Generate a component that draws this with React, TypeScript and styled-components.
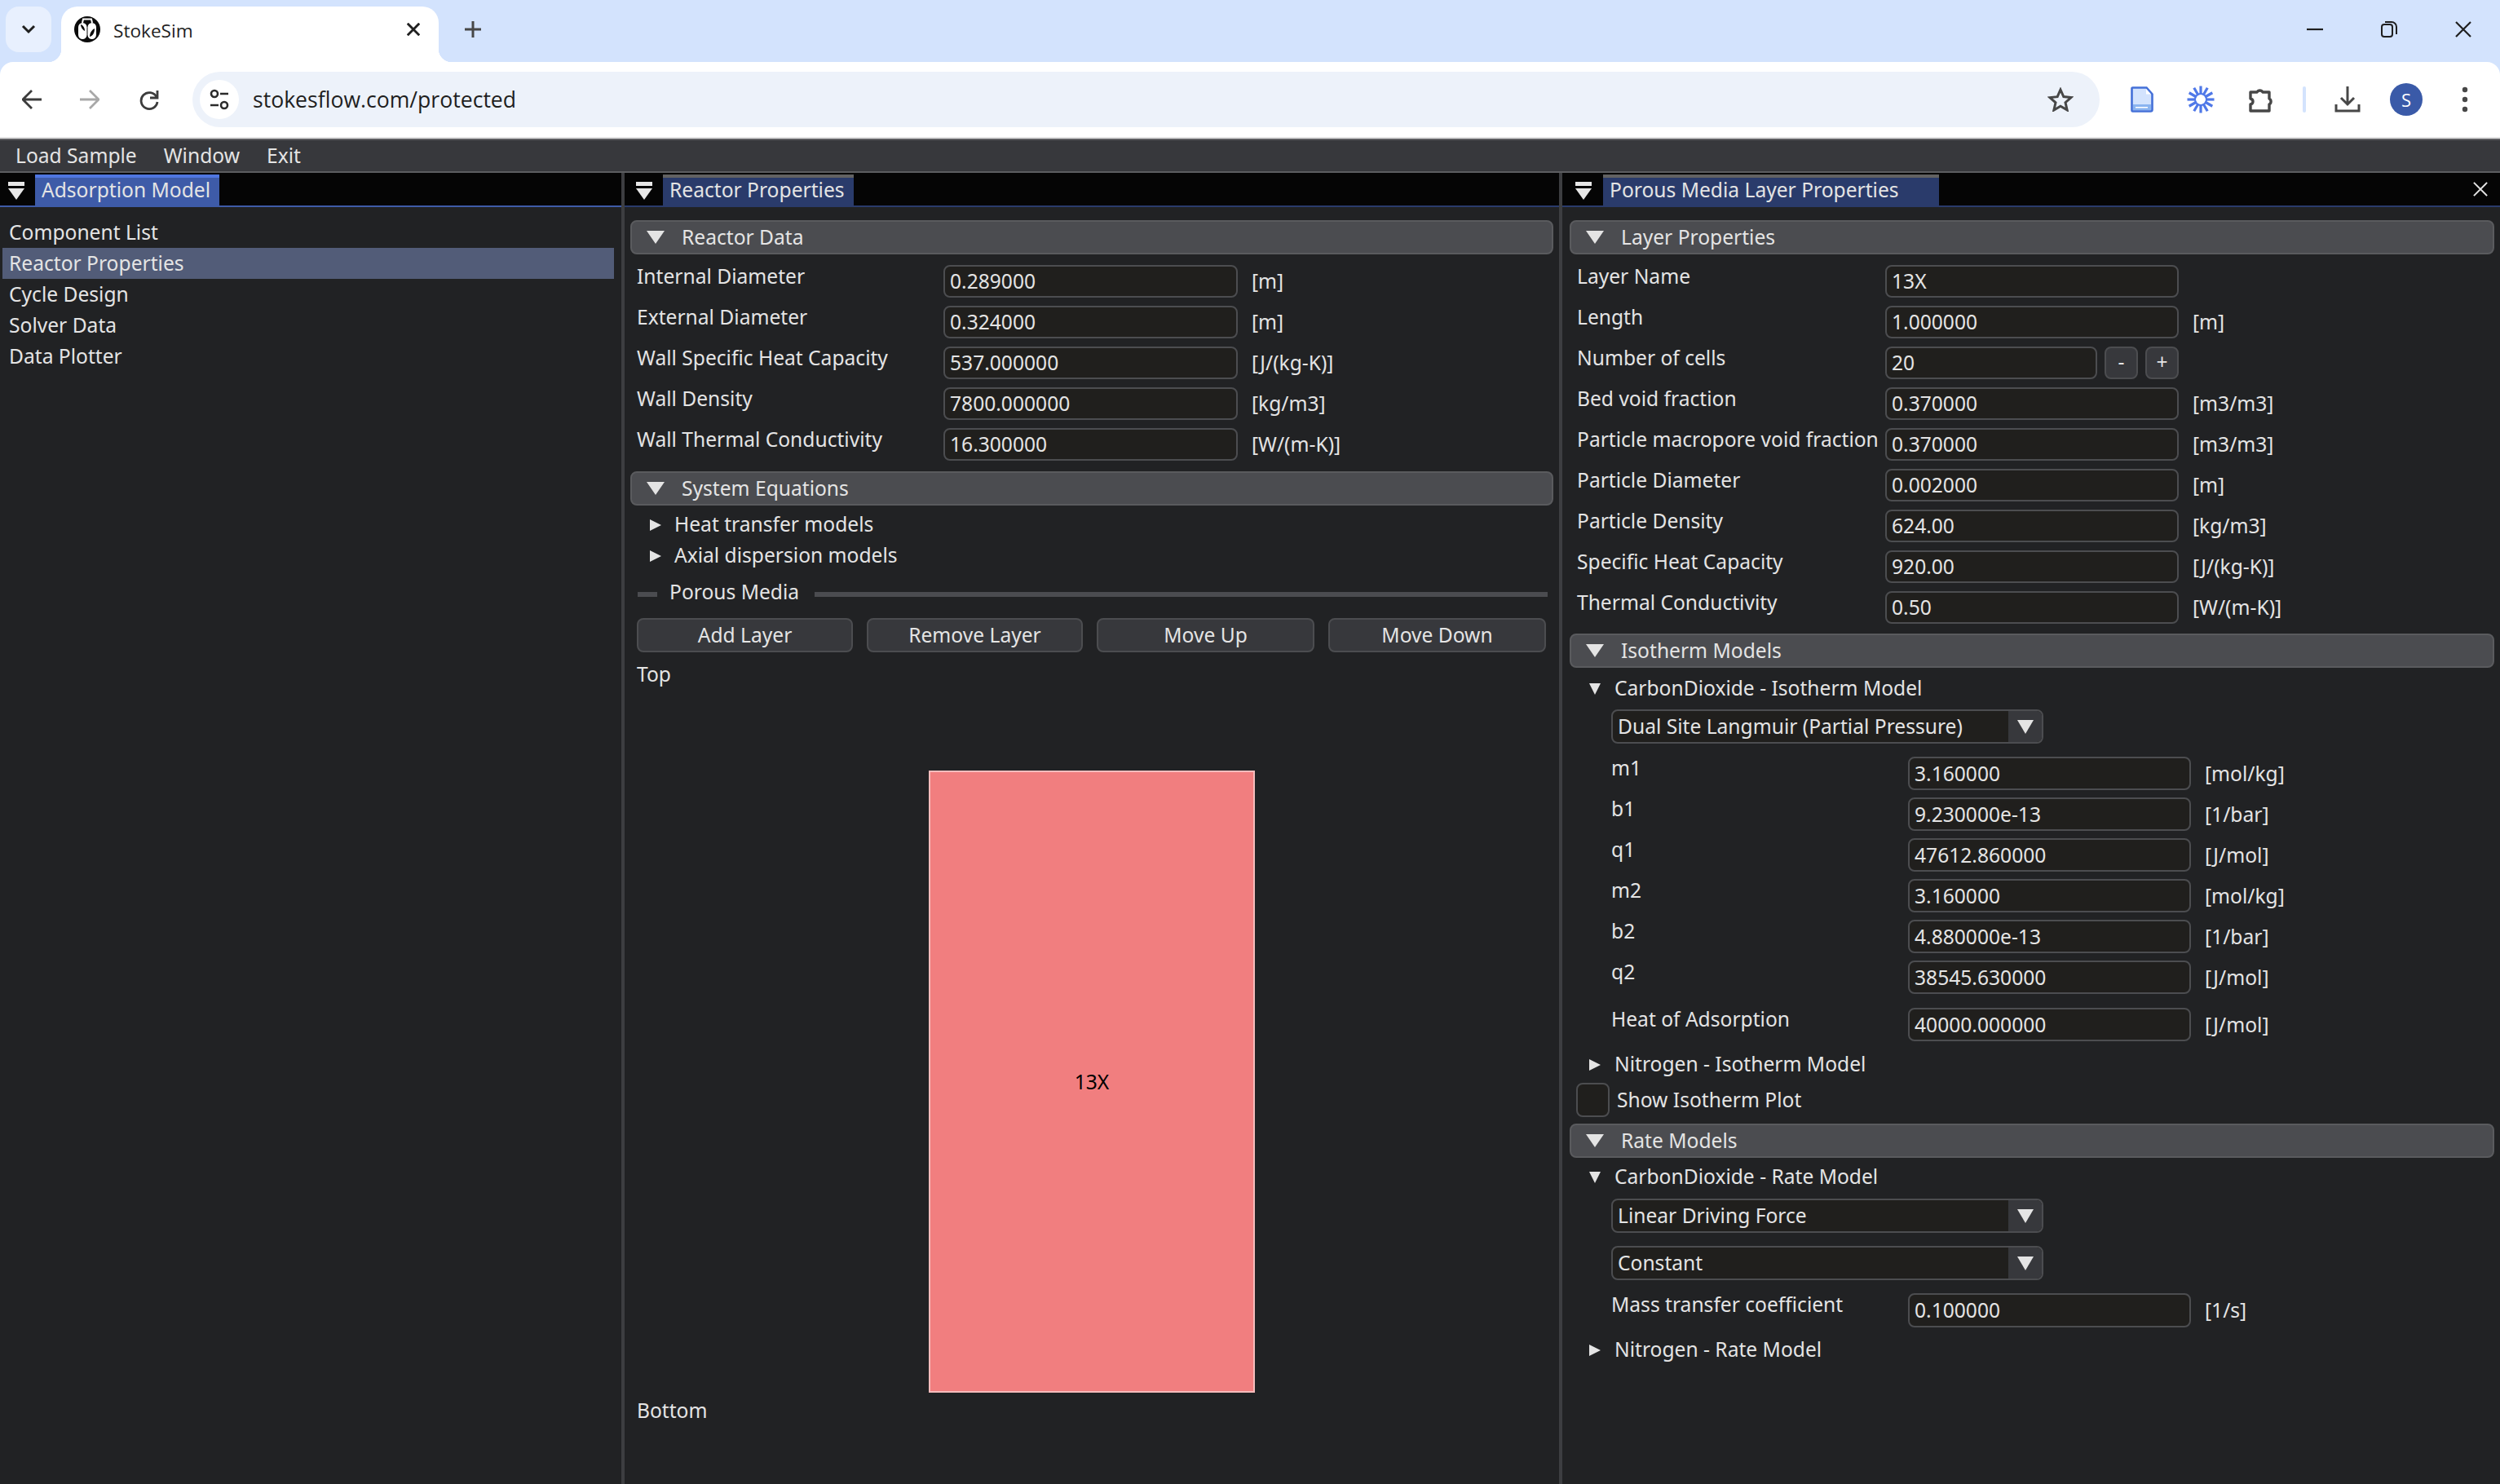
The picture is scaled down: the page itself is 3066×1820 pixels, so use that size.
import React from 'react';
import styled, { createGlobalStyle } from 'styled-components';

const GlobalStyle = createGlobalStyle`
  html, body {
    margin: 0;
    padding: 0;
    background: #212224;
  }
`;

const Page = styled.div`
  width: 3066px;
  height: 1820px;
  overflow: hidden;
  display: flex;
  flex-direction: column;
  font-family: 'Noto Sans', sans-serif;
`;

/* browser chrome */
const ChromeFrame = styled.div`
  flex: none;
  background: #d3e3fd;
`;

const TabStrip = styled.div`
  height: 76px;
  display: flex;
  padding-left: 7px;
  box-sizing: border-box;
  align-items: flex-start;
`;

const TabSearch = styled.div`
  width: 56px;
  height: 56px;
  margin-top: 8px;
  border-radius: 16px;
  background: #e8f0fe;
  display: flex;
  align-items: center;
  justify-content: center;
`;

const ActiveTab = styled.div`
  width: 463px;
  height: 68px;
  margin: 8px 0 0 12px;
  background: #fff;
  border-radius: 20px 20px 0 0;
  display: flex;
  align-items: flex-start;
  padding: 12px 23px 0 16px;
  box-sizing: border-box;
  position: relative;
  z-index: 1;

  &:before,
  &:after {
    content: '';
    position: absolute;
    bottom: 0;
    width: 16px;
    height: 16px;
  }
  &:before {
    left: -16px;
    background: radial-gradient(circle at 0 0, transparent 16px, #fff 16.5px);
  }
  &:after {
    right: -16px;
    background: radial-gradient(circle at 100% 0, transparent 16px, #fff 16.5px);
  }
`;

const TabTitle = styled.span`
  flex: 1;
  margin-left: 16px;
  font-family: 'Open Sans', sans-serif;
  font-size: 22.6px;
  line-height: 36px;
  color: #1f1f1f;
`;

const TabClose = styled.div`
  margin-top: 8px;
  display: flex;
`;

const NewTab = styled.div`
  width: 40px;
  height: 40px;
  margin: 16px 0 0 22px;
  display: flex;
`;

const WindowControls = styled.div`
  margin-left: auto;
  height: 72px;
  display: flex;
  align-items: center;
  padding-right: 35px;
  gap: 71px;
`;

const Toolbar = styled.div`
  height: 94px;
  box-sizing: border-box;
  background: #fff;
  border-bottom: 2px solid #e3e3e3;
  border-radius: 16px 16px 0 0;
  display: flex;
  align-items: center;
  padding: 0 0 0 27px;
`;

const NavButton = styled.div<{ $gap?: number }>`
  width: 24px;
  height: 24px;
  flex: none;
  display: flex;
  margin-right: ${(p) => p.$gap ?? 0}px;
`;

const Omnibox = styled.div`
  width: 2339px;
  height: 68px;
  flex: none;
  box-sizing: border-box;
  background: #edf2fa;
  border-radius: 34px;
  display: flex;
  align-items: center;
  padding: 0 32px 0 9px;
`;

const SiteInfo = styled.div`
  width: 48px;
  height: 48px;
  border-radius: 50%;
  background: #fff;
  display: flex;
  align-items: center;
  justify-content: center;
  flex: none;
`;

const Url = styled.span`
  flex: 1;
  margin-left: 17px;
  font-family: 'Open Sans', sans-serif;
  font-size: 26.6px;
  color: #1f1f1f;
`;

const ToolbarIcons = styled.div`
  display: flex;
  align-items: center;
  margin-left: 38px;
`;

const IconSlot = styled.div<{ $width: number; $gap: number }>`
  width: ${(p) => p.$width}px;
  height: 40px;
  margin-right: ${(p) => p.$gap}px;
  display: flex;
  align-items: center;
  justify-content: center;
  flex: none;
`;

const Divider = styled.div`
  width: 4px;
  height: 32px;
  margin-right: 35px;
  background: #d3e3fd;
  border-radius: 2px;
`;

const Avatar = styled.div`
  width: 40px;
  height: 40px;
  border-radius: 50%;
  background: #3a5aa8;
  color: #fff;
  font-family: 'Open Sans', sans-serif;
  font-size: 22px;
  display: flex;
  align-items: center;
  justify-content: center;
  margin-right: 48px;
  flex: none;
`;

/* imgui app */
const MenuBar = styled.div`
  height: 42px;
  flex: none;
  box-sizing: border-box;
  background: #37383c;
  border-top: 2px solid #5c5d60;
  border-bottom: 2px solid #5c5d60;
  display: flex;
  align-items: center;
  padding: 0 0 2px 19px;
  gap: 33px;
  color: #e4e4e4;
  font-size: 24.6px;
`;

const Dock = styled.div`
  flex: 1;
  display: flex;
  min-height: 0;
  color: #e4e4e4;
  font-size: 24.6px;
`;

const Panel = styled.div<{ $width: number }>`
  width: ${(p) => p.$width}px;
  flex: none;
  display: flex;
  flex-direction: column;
  background: #212224;
`;

const Splitter = styled.div`
  width: 4px;
  flex: none;
  background: #3d3e41;
`;

const PanelTabs = styled.div<{ $active?: boolean }>`
  height: 42px;
  flex: none;
  box-sizing: border-box;
  background: #050505;
  border-bottom: 2px solid ${(p) => (p.$active ? '#3e5ba8' : '#2a3b6b')};
  display: flex;
  align-items: flex-end;
  padding-top: 2px;
`;

const MenuGlyph = styled.div<{ $pad: number; $gap: number }>`
  flex: none;
  margin: 0 ${(p) => p.$gap}px 7px ${(p) => p.$pad}px;
  width: 20px;
  height: 22px;
  display: flex;
  flex-direction: column;
  align-items: center;

  &:before {
    content: '';
    width: 20px;
    height: 5px;
    background: #e8e8e8;
    margin-bottom: 3px;
  }
  &:after {
    content: '';
    width: 0;
    height: 0;
    border-left: 10px solid transparent;
    border-right: 10px solid transparent;
    border-top: 14px solid #e8e8e8;
  }
`;

const PanelTab = styled.div<{ $active?: boolean; $width: number }>`
  width: ${(p) => p.$width}px;
  height: 38px;
  box-sizing: border-box;
  padding-left: 8px;
  white-space: nowrap;
  background: ${(p) => (p.$active ? '#3e5ba8' : '#2a3b6b')};
  border-top: 4px solid ${(p) => (p.$active ? '#4f76e0' : '#626262')};
  line-height: 30px;
`;

const CloseGlyph = styled.div`
  margin: 0 15px 11px auto;
  width: 18px;
  height: 18px;
  display: flex;
`;

const PanelBody = styled.div<{ $left: number; $right: number }>`
  flex: 1;
  display: flex;
  flex-direction: column;
  padding: 16px ${(p) => p.$right}px 0 ${(p) => p.$left}px;
  min-height: 0;
`;

const ListBody = styled.div`
  padding: 12px 9px 0 3px;
`;

const ListItem = styled.div<{ $selected?: boolean }>`
  height: 38px;
  line-height: 37px;
  padding-left: 8px;
  background: ${(p) => (p.$selected ? '#525c78' : 'transparent')};
`;

const Triangle = styled.span<{ $w: number; $h: number; $dir?: 'down' | 'right' }>`
  display: block;
  flex: none;
  width: 0;
  height: 0;
  ${(p) =>
    p.$dir === 'right'
      ? `border-top: ${p.$h / 2}px solid transparent;
         border-bottom: ${p.$h / 2}px solid transparent;
         border-left: ${p.$w}px solid #e4e4e4;`
      : `border-left: ${p.$w / 2}px solid transparent;
         border-right: ${p.$w / 2}px solid transparent;
         border-top: ${p.$h}px solid #e4e4e4;`}
`;

const SectionHeader = styled.div<{ $mt?: number }>`
  height: 42px;
  flex: none;
  box-sizing: border-box;
  margin-top: ${(p) => p.$mt ?? 0}px;
  background: #4b4c50;
  border: 2px solid #5a5b5e;
  border-radius: 8px;
  display: flex;
  align-items: center;
  padding-left: 18px;
`;

const SectionTitle = styled.span`
  margin: 0 0 2px 21px;
`;

const TreeNode = styled.div<{ $mt: number; $indent: number }>`
  height: 38px;
  flex: none;
  margin-top: ${(p) => p.$mt}px;
  padding: 0 0 0 ${(p) => p.$indent}px;
  display: flex;
  align-items: center;
`;

const TreeTriangleBox = styled.div<{ $width: number }>`
  width: ${(p) => p.$width}px;
  flex: none;
  padding-top: 2px;
`;

const TreeTitle = styled.span`
  margin-bottom: 2px;
`;

const Fields = styled.div<{ $mt: number; $gap: number; $left: number }>`
  display: flex;
  flex-direction: column;
  margin-top: ${(p) => p.$mt}px;
  gap: ${(p) => p.$gap}px;
  padding-left: ${(p) => p.$left}px;
  flex: none;
`;

const FieldRow = styled.div`
  display: flex;
  align-items: center;
`;

const FieldLabel = styled.span<{ $width: number }>`
  width: ${(p) => p.$width}px;
  flex: none;
  align-self: flex-start;
  line-height: 27px;
  white-space: nowrap;
`;

const Frame = styled.div<{ $width: number; $height?: number }>`
  width: ${(p) => p.$width}px;
  height: ${(p) => p.$height ?? 40}px;
  flex: none;
  box-sizing: border-box;
  background: #201f1d;
  border: 2px solid #4c4d50;
  border-radius: 8px;
  padding: 0 0 ${(p) => (p.$height === 41 ? 1 : 2)}px 6px;
  display: flex;
  align-items: center;
  position: relative;
  overflow: hidden;
`;

const Unit = styled.span`
  margin: 0 0 1px 17px;
  white-space: nowrap;
`;

const StepButton = styled.div`
  width: 41px;
  height: 40px;
  flex: none;
  box-sizing: border-box;
  margin-left: 9px;
  background: #37383c;
  border: 2px solid #4c4d50;
  border-radius: 8px;
  text-align: center;
  line-height: 34px;
`;

const ComboArrow = styled.div`
  position: absolute;
  right: 0;
  top: 0;
  bottom: 0;
  width: 41px;
  background: #37383c;
  display: flex;
  align-items: center;
  justify-content: center;
`;

const Combo = styled(Frame)<{ $mt: number }>`
  margin-top: ${(p) => p.$mt}px;
  margin-left: 51px;
`;

const SeparatorRow = styled.div`
  height: 38px;
  margin-top: 7px;
  flex: none;
  display: flex;
  align-items: center;
  padding: 0 7px 0 9px;
`;

const SeparatorLine = styled.div<{ $width?: number }>`
  height: 6px;
  margin-top: 6px;
  background: #4b4c50;
  ${(p) => (p.$width ? `width: ${p.$width}px; flex: none;` : 'flex: 1;')}
`;

const SeparatorText = styled.span`
  margin: 0 19px 2px 15px;
`;

const ButtonRow = styled.div`
  margin-top: 13px;
  padding: 0 9px 0 8px;
  display: grid;
  grid-template-columns: 265px 265px 267px 267px;
  column-gap: 17px;
  flex: none;
`;

const ActionButton = styled.div`
  height: 42px;
  box-sizing: border-box;
  background: #37383c;
  border: 2px solid #4c4d50;
  border-radius: 8px;
  text-align: center;
  line-height: 37px;
`;

const PlainText = styled.div<{ $mt: number; $lh: number }>`
  height: 38px;
  flex: none;
  line-height: ${(p) => p.$lh}px;
  margin-top: ${(p) => p.$mt}px;
  padding-left: 8px;
`;

const LayerBlock = styled.div`
  width: 400px;
  height: 763px;
  flex: none;
  align-self: center;
  box-sizing: border-box;
  margin-top: 98px;
  padding-bottom: 1px;
  background: #f17e7f;
  border: 2px solid #f5bcbc;
  color: #000;
  display: flex;
  align-items: center;
  justify-content: center;
`;

const CheckRow = styled.div`
  margin-top: 4px;
  padding-left: 8px;
  display: flex;
  align-items: center;
  flex: none;
`;

const CheckLabel = styled.span`
  margin: 0 0 2px 9px;
`;

const Chevron = () => (
  <svg width="20" height="20" viewBox="0 0 20 20" fill="none" stroke="#1f1f1f" strokeWidth="3">
    <path d="M3 6l7 7 7-7" />
  </svg>
);

const Favicon = () => (
  <svg width="32" height="32" viewBox="0 0 32 32">
    <circle cx="16" cy="16" r="16" fill="#0b0b0b" />
    <path d="M10 8l1-4.500h10l1 4.500" fill="none" stroke="#fff" strokeWidth="2" />
    <rect x="5" y="8" width="10.500" height="20" rx="5.250" fill="#fff" />
    <rect x="16.500" y="8" width="10.500" height="20" rx="5.250" fill="#fff" />
    <path d="M8 10c3 1 5 4 5 8-2-1-5-4-5-8z" fill="#0b0b0b" />
    <path d="M25 15c0 5-2 9-6 10 0-4 2-8 6-10z" fill="#0b0b0b" />
  </svg>
);

const Tune = () => (
  <svg width="24" height="28" viewBox="0 0 24 28" fill="none" stroke="#2b2b2b" strokeWidth="2.600">
    <circle cx="6" cy="7" r="4" />
    <path d="M13 7h10M1 21h10" />
    <circle cx="18" cy="21" r="4" />
  </svg>
);

const Arrow = ({ color, flip }: { color: string; flip?: boolean }) => (
  <svg width="24" height="24" viewBox="0 0 24 24" fill="none" stroke={color} strokeWidth="2.800">
    <path d={flip ? 'M0 12h22M12 1l11 11-11 11' : 'M24 12H2M12 1L1 12l11 11'} />
  </svg>
);

const Reload = () => (
  <svg width="24" height="26" viewBox="0 0 24 26" fill="none" stroke="#3c3c3c" strokeWidth="2.800">
    <path d="M21 9a10 10 0 1 0 1 6" />
    <path d="M22 1v9h-9" />
  </svg>
);

const Star = () => (
  <svg width="32" height="30" viewBox="0 0 32 30" fill="none" stroke="#474747" strokeWidth="3">
    <path d="M16 3l3.800 8.600 9.200.9-7 6.200 2.100 9.200L16 23.200 7.900 28l2.100-9.200-7-6.200 9.200-.9z" />
  </svg>
);

const DocIcon = () => (
  <svg width="28" height="32" viewBox="0 0 28 32">
    <path d="M2.500 1.500h17l7 8v19a2 2 0 0 1-2 2h-22a1 1 0 0 1-1-1v-27a1 1 0 0 1 1-1z" fill="#d3e3fd" stroke="#4470d8" strokeWidth="2.600" />
    <path d="M19 3v6.500h6z" fill="#fff" />
    <rect x="3" y="22" width="22" height="7" fill="#8ab4f0" />
    <rect x="6" y="25" width="15" height="1.500" fill="#fff" />
  </svg>
);

const sparkleAngles = Array.from({ length: 12 }, (_, i) => (i * Math.PI) / 6);

const Sparkle = () => (
  <svg width="34" height="34" viewBox="0 0 34 34" stroke="#4f78e8" strokeWidth="3.200" fill="none">
    {sparkleAngles.map((a) => (
      <line
        key={a}
        x1={17 + 6 * Math.cos(a)}
        y1={17 + 6 * Math.sin(a)}
        x2={17 + 16.500 * Math.cos(a)}
        y2={17 + 16.500 * Math.sin(a)}
      />
    ))}
    <circle cx="17" cy="17" r="7" strokeWidth="2" />
  </svg>
);

const Puzzle = () => (
  <svg width="34" height="34" viewBox="0 0 34 34" fill="none" stroke="#474747" strokeWidth="3.400" strokeLinejoin="round">
    <path d="M4 8h8a4 4 0 0 1 7 0h8v8a4 4 0 0 1 0 7v8H4v-8c4-1 4-6 0-7z" />
  </svg>
);

const Download = () => (
  <svg width="32" height="32" viewBox="0 0 32 32" fill="none" stroke="#474747" strokeWidth="3">
    <path d="M16 0v21M8 14l8 8 8-8" />
    <path d="M2 22v8h28v-8" />
  </svg>
);

const Dots = () => (
  <svg width="8" height="32" viewBox="0 0 8 32" fill="#474747">
    <circle cx="4" cy="4" r="3.200" />
    <circle cx="4" cy="16" r="3.200" />
    <circle cx="4" cy="28" r="3.200" />
  </svg>
);

const Minimize = () => (
  <svg width="20" height="20" viewBox="0 0 20 20" stroke="#1f1f1f" strokeWidth="2.200">
    <path d="M0 10h20" />
  </svg>
);

const Restore = () => (
  <svg width="20" height="20" viewBox="0 0 20 20" fill="none" stroke="#1f1f1f" strokeWidth="2">
    <rect x="1" y="4" width="13" height="15" rx="3" />
    <path d="M5 1h8a6 6 0 0 1 6 6v9" />
  </svg>
);

const CloseIcon = ({ color, width = 2.200, size = 20 }: { color: string; width?: number; size?: number }) => (
  <svg width={size} height={size} viewBox="0 0 20 20" stroke={color} strokeWidth={width}>
    <path d="M1 1l18 18M19 1L1 19" />
  </svg>
);

const Plus = () => (
  <svg width="40" height="40" viewBox="0 0 40 40" stroke="#474747" strokeWidth="3">
    <path d="M20 10v20M10 20h20" />
  </svg>
);

const reactorFields = [
  ['Internal Diameter', '0.289000', '[m]'],
  ['External Diameter', '0.324000', '[m]'],
  ['Wall Specific Heat Capacity', '537.000000', '[J/(kg-K)]'],
  ['Wall Density', '7800.000000', '[kg/m3]'],
  ['Wall Thermal Conductivity', '16.300000', '[W/(m-K)]'],
];

const layerTail = [
  ['Bed void fraction', '0.370000', '[m3/m3]'],
  ['Particle macropore void fraction', '0.370000', '[m3/m3]'],
  ['Particle Diameter', '0.002000', '[m]'],
  ['Particle Density', '624.00', '[kg/m3]'],
  ['Specific Heat Capacity', '920.00', '[J/(kg-K)]'],
  ['Thermal Conductivity', '0.50', '[W/(m-K)]'],
];

const isothermFields = [
  ['m1', '3.160000', '[mol/kg]'],
  ['b1', '9.230000e-13', '[1/bar]'],
  ['q1', '47612.860000', '[J/mol]'],
  ['m2', '3.160000', '[mol/kg]'],
  ['b2', '4.880000e-13', '[1/bar]'],
  ['q2', '38545.630000', '[J/mol]'],
];

const Field: React.FC<{ label: string; value: string; unit?: string; labelWidth: number; inputWidth: number; height?: number }> = ({
  label,
  value,
  unit,
  labelWidth,
  inputWidth,
  height,
}) => (
  <FieldRow>
    <FieldLabel $width={labelWidth}>{label}</FieldLabel>
    <Frame $width={inputWidth} $height={height}>{value}</Frame>
    {unit && <Unit>{unit}</Unit>}
  </FieldRow>
);

const Header: React.FC<{ title: string; mt?: number }> = ({ title, mt }) => (
  <SectionHeader $mt={mt}>
    <Triangle $w={22} $h={16} />
    <SectionTitle>{title}</SectionTitle>
  </SectionHeader>
);

const Tree: React.FC<{ title: string; mt: number; indent: number; box: number; open?: boolean }> = ({ title, mt, indent, box, open }) => (
  <TreeNode $mt={mt} $indent={indent}>
    <TreeTriangleBox $width={box}>{open ? <Triangle $w={14} $h={14} /> : <Triangle $w={14} $h={15} $dir="right" />}</TreeTriangleBox>
    <TreeTitle>{title}</TreeTitle>
  </TreeNode>
);

const Select: React.FC<{ value: string; mt: number }> = ({ value, mt }) => (
  <Combo $width={530} $height={42} $mt={mt}>
    {value}
    <ComboArrow>
      <Triangle $w={21} $h={17} />
    </ComboArrow>
  </Combo>
);

const App: React.FC = () => {
  return (
    <Page>
      <GlobalStyle />
      <ChromeFrame>
        <TabStrip>
          <TabSearch>
            <Chevron />
          </TabSearch>
          <ActiveTab>
            <Favicon />
            <TabTitle>StokeSim</TabTitle>
            <TabClose>
              <CloseIcon color="#1f1f1f" width={3.600} size={16} />
            </TabClose>
          </ActiveTab>
          <NewTab>
            <Plus />
          </NewTab>
          <WindowControls>
            <Minimize />
            <Restore />
            <CloseIcon color="#1f1f1f" />
          </WindowControls>
        </TabStrip>
        <Toolbar>
          <NavButton $gap={47}>
            <Arrow color="#3c3c3c" />
          </NavButton>
          <NavButton $gap={49}>
            <Arrow color="#a8a8a8" flip />
          </NavButton>
          <NavButton $gap={41}>
            <Reload />
          </NavButton>
          <Omnibox>
            <SiteInfo>
              <Tune />
            </SiteInfo>
            <Url>stokesflow.com/protected</Url>
            <Star />
          </Omnibox>
          <ToolbarIcons>
            <IconSlot $width={28} $gap={41}>
              <DocIcon />
            </IconSlot>
            <IconSlot $width={34} $gap={40}>
              <Sparkle />
            </IconSlot>
            <IconSlot $width={34} $gap={34}>
              <Puzzle />
            </IconSlot>
            <Divider />
            <IconSlot $width={32} $gap={36}>
              <Download />
            </IconSlot>
            <Avatar>S</Avatar>
            <Dots />
          </ToolbarIcons>
        </Toolbar>
      </ChromeFrame>

      <MenuBar>
        <span>Load Sample</span>
        <span>Window</span>
        <span>Exit</span>
      </MenuBar>

      <Dock>
        <Panel $width={762}>
          <PanelTabs $active>
            <MenuGlyph $pad={10} $gap={13} />
            <PanelTab $active $width={226}>Adsorption Model</PanelTab>
          </PanelTabs>
          <ListBody>
            <ListItem>Component List</ListItem>
            <ListItem $selected>Reactor Properties</ListItem>
            <ListItem>Cycle Design</ListItem>
            <ListItem>Solver Data</ListItem>
            <ListItem>Data Plotter</ListItem>
          </ListBody>
        </Panel>
        <Splitter />

        <Panel $width={1146}>
          <PanelTabs>
            <MenuGlyph $pad={14} $gap={13} />
            <PanelTab $width={234}>Reactor Properties</PanelTab>
          </PanelTabs>
          <PanelBody $left={7} $right={7}>
            <Header title="Reactor Data" />
            <Fields $mt={13} $gap={10} $left={8}>
              {reactorFields.map(([label, value, unit]) => (
                <Field key={label} label={label} value={value} unit={unit} labelWidth={376} inputWidth={361} />
              ))}
            </Fields>
            <Header title="System Equations" mt={13} />
            <Tree title="Heat transfer models" mt={4} indent={24} box={30} />
            <Tree title="Axial dispersion models" mt={0} indent={24} box={30} />
            <SeparatorRow>
              <SeparatorLine $width={24} />
              <SeparatorText>Porous Media</SeparatorText>
              <SeparatorLine />
            </SeparatorRow>
            <ButtonRow>
              <ActionButton>Add Layer</ActionButton>
              <ActionButton>Remove Layer</ActionButton>
              <ActionButton>Move Up</ActionButton>
              <ActionButton>Move Down</ActionButton>
            </ButtonRow>
            <PlainText $mt={9} $lh={36}>Top</PlainText>
            <LayerBlock>13X</LayerBlock>
            <PlainText $mt={3} $lh={38}>Bottom</PlainText>
          </PanelBody>
        </Panel>
        <Splitter />

        <Panel $width={1150}>
          <PanelTabs>
            <MenuGlyph $pad={16} $gap={14} />
            <PanelTab $width={412}>Porous Media Layer Properties</PanelTab>
            <CloseGlyph>
              <CloseIcon color="#e4e4e4" size={18} />
            </CloseGlyph>
          </PanelTabs>
          <PanelBody $left={9} $right={7}>
            <Header title="Layer Properties" />
            <Fields $mt={13} $gap={10} $left={9}>
              <Field label="Layer Name" value="13X" labelWidth={378} inputWidth={360} />
              <Field label="Length" value="1.000000" unit="[m]" labelWidth={378} inputWidth={360} />
              <FieldRow>
                <FieldLabel $width={378}>Number of cells</FieldLabel>
                <Frame $width={260}>20</Frame>
                <StepButton>-</StepButton>
                <StepButton>+</StepButton>
              </FieldRow>
              {layerTail.map(([label, value, unit]) => (
                <Field key={label} label={label} value={value} unit={unit} labelWidth={378} inputWidth={360} />
              ))}
            </Fields>
            <Header title="Isotherm Models" mt={12} />
            <Tree title="CarbonDioxide - Isotherm Model" mt={6} indent={24} box={31} open />
            <Select value="Dual Site Langmuir (Partial Pressure)" mt={7} />
            <Fields $mt={16} $gap={9} $left={51}>
              {isothermFields.map(([label, value, unit]) => (
                <Field key={label} label={label} value={value} unit={unit} labelWidth={364} inputWidth={347} height={41} />
              ))}
            </Fields>
            <Fields $mt={17} $gap={0} $left={51}>
              <Field label="Heat of Adsorption" value="40000.000000" unit="[J/mol]" labelWidth={364} inputWidth={347} height={41} />
            </Fields>
            <Tree title="Nitrogen - Isotherm Model" mt={9} indent={24} box={31} />
            <CheckRow>
              <Frame $width={41} $height={42} />
              <CheckLabel>Show Isotherm Plot</CheckLabel>
            </CheckRow>
            <Header title="Rate Models" mt={8} />
            <Tree title="CarbonDioxide - Rate Model" mt={4} indent={24} box={31} open />
            <Select value="Linear Driving Force" mt={8} />
            <Select value="Constant" mt={16} />
            <Fields $mt={16} $gap={0} $left={51}>
              <Field label="Mass transfer coefficient" value="0.100000" unit="[1/s]" labelWidth={364} inputWidth={347} height={42} />
            </Fields>
            <Tree title="Nitrogen - Rate Model" mt={8} indent={24} box={31} />
          </PanelBody>
        </Panel>
      </Dock>
    </Page>
  );
};

export default App;
